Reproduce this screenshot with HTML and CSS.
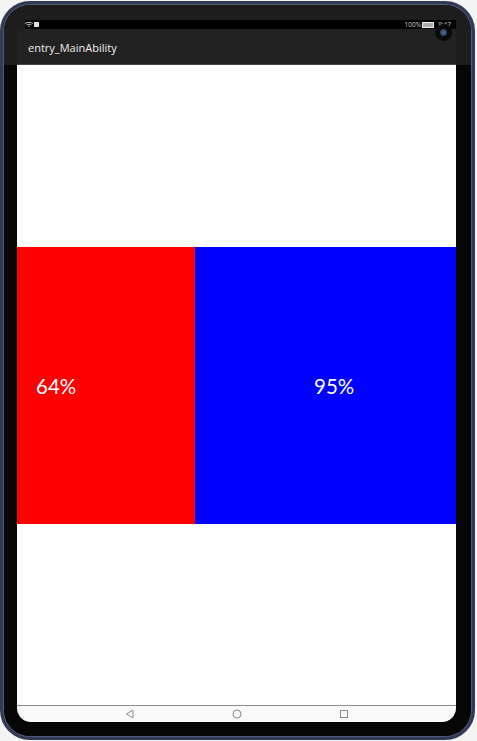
FILE: index.html
```html
<!DOCTYPE html>
<html lang="en">
<head>
    <meta charset="UTF-8">
    <meta name="viewport" content="width=device-width, initial-scale=1.0">
    <title>entry_MainAbility</title>
    <link rel="stylesheet" href="styles.css">
</head>
<body>
    <div class="device">
        <div class="bezel">
            <div class="statusbar">
                <div class="status-left">
                    <svg class="wifi" width="8" height="6" viewBox="0 0 8 6"><path d="M0 1.500C2 0 6 0 8 1.500M1.500 3C3 2 5 2 6.500 3M3 4.500C3.500 4 4.500 4 5 4.500" fill="none" stroke="#ddd" stroke-width="0.9"/></svg>
                    <span class="sim"></span>
                </div>
                <div class="status-right">
                    <span>100%</span>
                    <span class="battery"></span>
                    <span>8:47</span>
                </div>
            </div>
            <div class="titlebar">entry_MainAbility</div>
            <div class="camera"><span class="lens"></span></div>
            <main class="content">
                <div class="row">
                    <div class="cell cell-red">64%</div>
                    <div class="cell cell-blue">95%</div>
                </div>
            </main>
            <div class="navbar">
                <svg width="10" height="10" viewBox="0 0 10 10"><path d="M8 1V9L1.500 5Z" fill="none" stroke="#8a8a8a" stroke-width="1"/></svg>
                <svg width="10" height="10" viewBox="0 0 10 10"><circle cx="5" cy="5" r="4" fill="none" stroke="#8a8a8a" stroke-width="1"/></svg>
                <svg width="10" height="10" viewBox="0 0 10 10"><rect x="1.500" y="1.500" width="7" height="7" fill="none" stroke="#8a8a8a" stroke-width="1"/></svg>
            </div>
        </div>
    </div>
</body>
</html>
```

FILE: styles.css
```css
html, body {
    margin: 0;
    padding: 0;
}
body {
    width: 477px;
    height: 741px;
    overflow: hidden;
    background-color: #f4f4f4;
    font-family: "Open Sans", "Liberation Sans", sans-serif;
}
.device {
    width: 475px;
    height: 739px;
    margin-top: 1px;
    box-sizing: border-box;
    border: 4px solid #323954;
    border-radius: 30px;
    background: #000;
}
.bezel {
    position: relative;
    height: 100%;
    box-sizing: border-box;
    padding: 15px 15px 14px 13px;
    border-radius: 26px;
    box-shadow: 0 0 0 1px #545a76;
    background: linear-gradient(#1d1d1d 0, #1d1d1d 60px, #060606 60px);
    display: flex;
    flex-direction: column;
}
.statusbar {
    height: 9px;
    margin: 0 0 0 8px;
    background: #000;
    color: #ccc;
    font-size: 6.500px;
    line-height: 9px;
    display: flex;
    justify-content: space-between;
    align-items: center;
    padding: 0 5px 0 0;
}
.status-left, .status-right {
    display: flex;
    align-items: center;
    gap: 1px;
}
.sim {
    width: 5px;
    height: 5px;
    background: #ddd;
}
.battery {
    width: 10px;
    height: 4px;
    margin-right: 3px;
    border: 1px solid #eee;
    background: #aaa;
}
.titlebar {
    height: 36px;
    box-sizing: border-box;
    padding: 11px 0 0 11px;
    background: #222;
    border-bottom: 1px solid #444;
    color: #eee;
    font-size: 11px;
    line-height: 16px;
}
.camera {
    position: absolute;
    top: 19px;
    right: 19px;
    width: 17px;
    height: 17px;
    border-radius: 50%;
    background: #0a0a0a;
    display: flex;
    align-items: center;
    justify-content: center;
}
.lens {
    width: 7px;
    height: 7px;
    border-radius: 50%;
    background: radial-gradient(#4d6f9c, #1c2a40);
}
.content {
    flex: 1;
    box-sizing: border-box;
    padding-top: 1px;
    background: #fff;
    display: flex;
    align-items: center;
}
.row {
    width: 100%;
    height: 277px;
    display: flex;
}
.cell {
    display: flex;
    align-items: center;
    color: #fff;
    font-family: "Lato", sans-serif;
    font-size: 20.500px;
}
.cell-red {
    width: 178px;
    padding-left: 19px;
    box-sizing: border-box;
    background: #f00;
}
.cell-blue {
    flex: 1;
    padding-left: 119px;
    background: #00f;
}
.navbar {
    height: 17px;
    box-sizing: border-box;
    border-top: 1px solid #8c8c8c;
    border-radius: 0 0 14px 14px;
    background: #fafafa;
    display: flex;
    align-items: center;
    justify-content: center;
    gap: 97px;
}
```
